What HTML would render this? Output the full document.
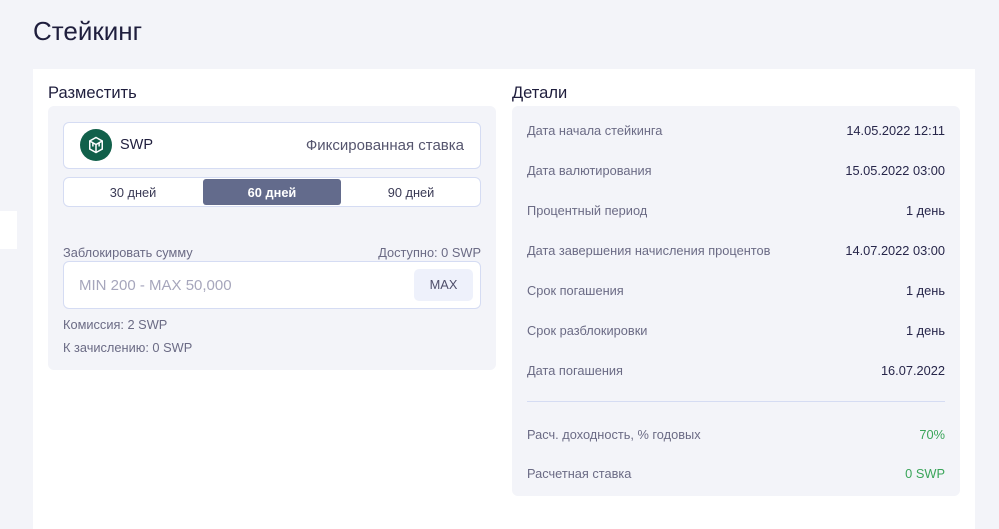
<!DOCTYPE html>
<html><head><meta charset="utf-8"><style>
*{margin:0;padding:0;box-sizing:border-box}
body{width:999px;height:514px;background:#f3f4f9;font-family:"Liberation Sans",sans-serif;position:relative;overflow:hidden;color:#27264a}
.abs{position:absolute}
h1{position:absolute;left:33px;top:16px;font-size:26px;font-weight:400;color:#1f1e3d}
.card{left:33px;top:69px;width:942px;height:460px;background:#fff}
.h2{font-size:16.5px;font-weight:500;color:#1f1e3d}
.gray{background:#f3f4f9;border-radius:6px}
.box{background:#fff;border:1px solid #d5dcf3;border-radius:6px}
.lbl{font-size:12.8px;color:#6b6b85}
.row{position:absolute;left:15px;right:15px;font-size:12.8px;display:flex;justify-content:space-between}
.row span:first-child{color:#6b6b85}
.row span:last-child{color:#27264a}
</style></head><body>
<h1>Стейкинг</h1>
<div class="abs" style="left:0;top:211px;width:17px;height:38px;background:#fff"></div>
<div class="abs card"></div>
<div class="abs h2" style="left:48px;top:84px">Разместить</div>
<div class="abs h2" style="left:512px;top:84px">Детали</div>
<div class="abs gray" style="left:48px;top:106px;width:448px;height:264px"></div>
<div class="abs box" style="left:63px;top:122px;width:418px;height:47px"></div>
<div class="abs" style="left:80px;top:129px;width:32px;height:32px;border-radius:50%;background:#11604a"></div>
<svg class="abs" style="left:86px;top:135px" width="20" height="20" viewBox="0 0 16 16" fill="none" stroke="#fff" stroke-width="1.2"><path d="M8 2l5 2.8v6.4L8 14 3 11.2V4.8z"/><path d="M3 4.8l5 2.8 5-2.8M8 7.6V14M5.5 6.2v3M10.5 6.2v3"/></svg>
<div class="abs" style="left:120px;top:137px;font-size:14.5px;color:#1f1e3d">SWP</div>
<div class="abs" style="right:535px;top:137px;font-size:15px;color:#55556e">Фиксированная ставка</div>
<div class="abs box" style="left:63px;top:177px;width:418px;height:30px"></div>
<div class="abs" style="left:203px;top:179px;width:138px;height:26px;background:#636b8c;border-radius:3px"></div>
<div class="abs" style="left:63px;top:185px;width:140px;text-align:center;font-size:12.8px;color:#3a3a55">30 дней</div>
<div class="abs" style="left:203px;top:185px;width:138px;text-align:center;font-size:12.8px;color:#fff;font-weight:700">60 дней</div>
<div class="abs" style="left:341px;top:185px;width:140px;text-align:center;font-size:12.8px;color:#3a3a55">90 дней</div>
<div class="abs lbl" style="left:63px;top:245px">Заблокировать сумму</div>
<div class="abs lbl" style="right:518px;top:245px">Доступно: 0 SWP</div>
<div class="abs box" style="left:63px;top:261px;width:418px;height:48px"></div>
<div class="abs" style="left:79px;top:277px;font-size:15px;color:#a6a6bc">MIN 200 - MAX 50,000</div>
<div class="abs" style="left:414px;top:269px;width:59px;height:32px;background:#eef1fb;border-radius:5px;font-size:12.8px;color:#4e4e6a;text-align:center;line-height:32px">MAX</div>
<div class="abs lbl" style="left:63px;top:317px">Комиссия: 2 SWP</div>
<div class="abs lbl" style="left:63px;top:340px">К зачислению: 0 SWP</div>
<div class="abs gray" style="left:512px;top:106px;width:448px;height:390px">
<div class="row" style="top:17px"><span>Дата начала стейкинга</span><span>14.05.2022 12:11</span></div>
<div class="row" style="top:57px"><span>Дата валютирования</span><span>15.05.2022 03:00</span></div>
<div class="row" style="top:97px"><span>Процентный период</span><span>1 день</span></div>
<div class="row" style="top:137px"><span>Дата завершения начисления процентов</span><span>14.07.2022 03:00</span></div>
<div class="row" style="top:177px"><span>Срок погашения</span><span>1 день</span></div>
<div class="row" style="top:217px"><span>Срок разблокировки</span><span>1 день</span></div>
<div class="row" style="top:257px"><span>Дата погашения</span><span>16.07.2022</span></div>
<div class="abs" style="left:15px;right:15px;top:295px;height:1px;background:#d5dcf3"></div>
<div class="row" style="top:321px"><span>Расч. доходность, % годовых</span><span style="color:#3aa55a!important">70%</span></div>
<div class="row" style="top:360px"><span>Расчетная ставка</span><span style="color:#3aa55a!important">0 SWP</span></div>
</div>
</body></html>
